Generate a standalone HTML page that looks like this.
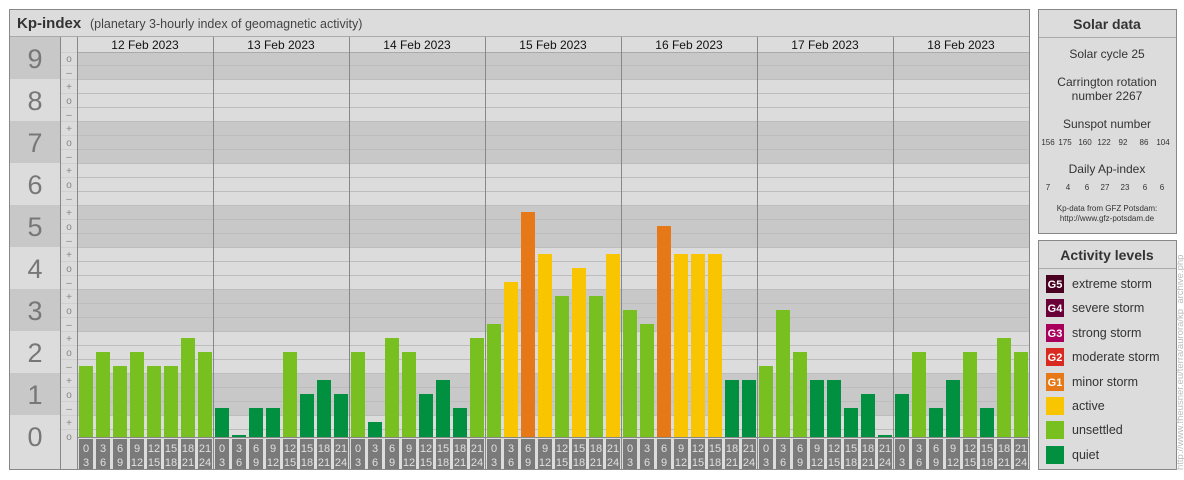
<!DOCTYPE html>
<html><head><meta charset="utf-8"><style>
html,body{margin:0;padding:0;background:#fff;}
svg{display:block;font-family:"Liberation Sans",Arial,sans-serif;}
</style></head><body>
<svg width="1184" height="480" viewBox="0 0 1184 480" xmlns="http://www.w3.org/2000/svg">
<rect x="0" y="0" width="1184" height="480" fill="#fff"/>
<!-- main panel -->
<rect x="9.5" y="9.5" width="1020" height="460" fill="#dcdcdc" stroke="#888" stroke-width="1"/>
<line x1="10" y1="36.5" x2="1029" y2="36.5" stroke="#aaa"/>
<text x="17" y="28" font-size="15" font-weight="bold" fill="#333">Kp-index</text>
<text x="90" y="28" font-size="12.5" fill="#444">(planetary 3-hourly index of geomagnetic activity)</text>
<!-- bands (left col + chart) -->
<g>
<rect x="10" y="37" width="50" height="42" fill="#c8c8c8"/>
<rect x="77" y="52" width="952" height="27" fill="#c8c8c8"/>
<rect x="10" y="121" width="50" height="42" fill="#c8c8c8"/><rect x="77" y="121" width="952" height="42" fill="#c8c8c8"/>
<rect x="10" y="205" width="50" height="42" fill="#c8c8c8"/><rect x="77" y="205" width="952" height="42" fill="#c8c8c8"/>
<rect x="10" y="289" width="50" height="42" fill="#c8c8c8"/><rect x="77" y="289" width="952" height="42" fill="#c8c8c8"/>
<rect x="10" y="373" width="50" height="42" fill="#c8c8c8"/><rect x="77" y="373" width="952" height="42" fill="#c8c8c8"/>
</g>
<!-- grid lines -->
<g stroke="#bdbdbd" stroke-width="1">
<line x1="60" y1="429.5" x2="1029" y2="429.5"/><line x1="60" y1="415.5" x2="1029" y2="415.5"/><line x1="60" y1="401.5" x2="1029" y2="401.5"/>
<line x1="60" y1="387.5" x2="1029" y2="387.5"/><line x1="60" y1="373.5" x2="1029" y2="373.5"/><line x1="60" y1="359.5" x2="1029" y2="359.5"/>
<line x1="60" y1="345.5" x2="1029" y2="345.5"/><line x1="60" y1="331.5" x2="1029" y2="331.5"/><line x1="60" y1="317.5" x2="1029" y2="317.5"/>
<line x1="60" y1="303.5" x2="1029" y2="303.5"/><line x1="60" y1="289.5" x2="1029" y2="289.5"/><line x1="60" y1="275.5" x2="1029" y2="275.5"/>
<line x1="60" y1="261.5" x2="1029" y2="261.5"/><line x1="60" y1="247.5" x2="1029" y2="247.5"/><line x1="60" y1="233.5" x2="1029" y2="233.5"/>
<line x1="60" y1="219.5" x2="1029" y2="219.5"/><line x1="60" y1="205.5" x2="1029" y2="205.5"/><line x1="60" y1="191.5" x2="1029" y2="191.5"/>
<line x1="60" y1="177.5" x2="1029" y2="177.5"/><line x1="60" y1="163.5" x2="1029" y2="163.5"/><line x1="60" y1="149.5" x2="1029" y2="149.5"/>
<line x1="60" y1="135.5" x2="1029" y2="135.5"/><line x1="60" y1="121.5" x2="1029" y2="121.5"/><line x1="60" y1="107.5" x2="1029" y2="107.5"/>
<line x1="60" y1="93.5" x2="1029" y2="93.5"/><line x1="60" y1="79.5" x2="1029" y2="79.5"/><line x1="60" y1="65.5" x2="1029" y2="65.5"/>
<line x1="60" y1="52.5" x2="1029" y2="52.5"/>
</g>
<rect x="61" y="37" width="16" height="433" fill="#dcdcdc" opacity="0.6"/>
<line x1="60.5" y1="37" x2="60.5" y2="470" stroke="#888"/>
<line x1="77.5" y1="37" x2="77.5" y2="470" stroke="#888"/>
<!-- Kp numbers -->
<g font-size="27" fill="#777" text-anchor="middle">
<text x="35" y="68">9</text><text x="35" y="110">8</text><text x="35" y="152">7</text><text x="35" y="194">6</text>
<text x="35" y="236">5</text><text x="35" y="278">4</text><text x="35" y="320">3</text><text x="35" y="362">2</text>
<text x="35" y="404">1</text><text x="35" y="446">0</text>
</g>
<!-- signs -->
<g font-size="10" fill="#888" text-anchor="middle">
<text x="69" y="62">o</text><text x="69" y="76">–</text>
<text x="69" y="90">+</text><text x="69" y="104">o</text><text x="69" y="118">–</text>
<text x="69" y="132">+</text><text x="69" y="146">o</text><text x="69" y="160">–</text>
<text x="69" y="174">+</text><text x="69" y="188">o</text><text x="69" y="202">–</text>
<text x="69" y="216">+</text><text x="69" y="230">o</text><text x="69" y="244">–</text>
<text x="69" y="258">+</text><text x="69" y="272">o</text><text x="69" y="286">–</text>
<text x="69" y="300">+</text><text x="69" y="314">o</text><text x="69" y="328">–</text>
<text x="69" y="342">+</text><text x="69" y="356">o</text><text x="69" y="370">–</text>
<text x="69" y="384">+</text><text x="69" y="398">o</text><text x="69" y="412">–</text>
<text x="69" y="426">+</text><text x="69" y="440">o</text>
</g>
<!-- date header -->
<rect x="78" y="37" width="951" height="15" fill="#dcdcdc"/>
<line x1="78" y1="52.5" x2="1029" y2="52.5" stroke="#aaa"/>
<g font-size="12" fill="#111" text-anchor="middle">
<text x="145" y="49">12 Feb 2023</text><text x="281" y="49">13 Feb 2023</text><text x="417" y="49">14 Feb 2023</text>
<text x="553" y="49">15 Feb 2023</text><text x="689" y="49">16 Feb 2023</text><text x="825" y="49">17 Feb 2023</text>
<text x="961" y="49">18 Feb 2023</text>
</g>
<!-- bars -->
<g>
<!-- d0 -->
<rect x="79" y="366" width="14" height="71" fill="#77c020"/><rect x="96" y="352" width="14" height="85" fill="#77c020"/>
<rect x="113" y="366" width="14" height="71" fill="#77c020"/><rect x="130" y="352" width="14" height="85" fill="#77c020"/>
<rect x="147" y="366" width="14" height="71" fill="#77c020"/><rect x="164" y="366" width="14" height="71" fill="#77c020"/>
<rect x="181" y="338" width="14" height="99" fill="#77c020"/><rect x="198" y="352" width="14" height="85" fill="#77c020"/>
<!-- d1 -->
<rect x="215" y="408" width="14" height="29" fill="#009040"/><rect x="232" y="435" width="14" height="2" fill="#009040"/>
<rect x="249" y="408" width="14" height="29" fill="#009040"/><rect x="266" y="408" width="14" height="29" fill="#009040"/>
<rect x="283" y="352" width="14" height="85" fill="#77c020"/><rect x="300" y="394" width="14" height="43" fill="#009040"/>
<rect x="317" y="380" width="14" height="57" fill="#009040"/><rect x="334" y="394" width="14" height="43" fill="#009040"/>
<!-- d2 -->
<rect x="351" y="352" width="14" height="85" fill="#77c020"/><rect x="368" y="422" width="14" height="15" fill="#009040"/>
<rect x="385" y="338" width="14" height="99" fill="#77c020"/><rect x="402" y="352" width="14" height="85" fill="#77c020"/>
<rect x="419" y="394" width="14" height="43" fill="#009040"/><rect x="436" y="380" width="14" height="57" fill="#009040"/>
<rect x="453" y="408" width="14" height="29" fill="#009040"/><rect x="470" y="338" width="14" height="99" fill="#77c020"/>
<!-- d3 -->
<rect x="487" y="324" width="14" height="113" fill="#77c020"/><rect x="504" y="282" width="14" height="155" fill="#f9c400"/>
<rect x="521" y="212" width="14" height="225" fill="#e67817"/><rect x="538" y="254" width="14" height="183" fill="#f9c400"/>
<rect x="555" y="296" width="14" height="141" fill="#77c020"/><rect x="572" y="268" width="14" height="169" fill="#f9c400"/>
<rect x="589" y="296" width="14" height="141" fill="#77c020"/><rect x="606" y="254" width="14" height="183" fill="#f9c400"/>
<!-- d4 -->
<rect x="623" y="310" width="14" height="127" fill="#77c020"/><rect x="640" y="324" width="14" height="113" fill="#77c020"/>
<rect x="657" y="226" width="14" height="211" fill="#e67817"/><rect x="674" y="254" width="14" height="183" fill="#f9c400"/>
<rect x="691" y="254" width="14" height="183" fill="#f9c400"/><rect x="708" y="254" width="14" height="183" fill="#f9c400"/>
<rect x="725" y="380" width="14" height="57" fill="#009040"/><rect x="742" y="380" width="14" height="57" fill="#009040"/>
<!-- d5 -->
<rect x="759" y="366" width="14" height="71" fill="#77c020"/><rect x="776" y="310" width="14" height="127" fill="#77c020"/>
<rect x="793" y="352" width="14" height="85" fill="#77c020"/><rect x="810" y="380" width="14" height="57" fill="#009040"/>
<rect x="827" y="380" width="14" height="57" fill="#009040"/><rect x="844" y="408" width="14" height="29" fill="#009040"/>
<rect x="861" y="394" width="14" height="43" fill="#009040"/><rect x="878" y="435" width="14" height="2" fill="#009040"/>
<!-- d6 -->
<rect x="895" y="394" width="14" height="43" fill="#009040"/><rect x="912" y="352" width="14" height="85" fill="#77c020"/>
<rect x="929" y="408" width="14" height="29" fill="#009040"/><rect x="946" y="380" width="14" height="57" fill="#009040"/>
<rect x="963" y="352" width="14" height="85" fill="#77c020"/><rect x="980" y="408" width="14" height="29" fill="#009040"/>
<rect x="997" y="338" width="14" height="99" fill="#77c020"/><rect x="1014" y="352" width="14" height="85" fill="#77c020"/>
</g>
<!-- bottom label area -->
<rect x="78" y="438" width="951" height="32" fill="#dcdcdc"/>
<line x1="78" y1="437.5" x2="1029" y2="437.5" stroke="#888"/>
<g fill="#7a7a7a">
<rect x="79" y="439" width="14" height="30"/><rect x="96" y="439" width="14" height="30"/><rect x="113" y="439" width="14" height="30"/><rect x="130" y="439" width="14" height="30"/><rect x="147" y="439" width="14" height="30"/><rect x="164" y="439" width="14" height="30"/><rect x="181" y="439" width="14" height="30"/><rect x="198" y="439" width="14" height="30"/>
<rect x="215" y="439" width="14" height="30"/><rect x="232" y="439" width="14" height="30"/><rect x="249" y="439" width="14" height="30"/><rect x="266" y="439" width="14" height="30"/><rect x="283" y="439" width="14" height="30"/><rect x="300" y="439" width="14" height="30"/><rect x="317" y="439" width="14" height="30"/><rect x="334" y="439" width="14" height="30"/>
<rect x="351" y="439" width="14" height="30"/><rect x="368" y="439" width="14" height="30"/><rect x="385" y="439" width="14" height="30"/><rect x="402" y="439" width="14" height="30"/><rect x="419" y="439" width="14" height="30"/><rect x="436" y="439" width="14" height="30"/><rect x="453" y="439" width="14" height="30"/><rect x="470" y="439" width="14" height="30"/>
<rect x="487" y="439" width="14" height="30"/><rect x="504" y="439" width="14" height="30"/><rect x="521" y="439" width="14" height="30"/><rect x="538" y="439" width="14" height="30"/><rect x="555" y="439" width="14" height="30"/><rect x="572" y="439" width="14" height="30"/><rect x="589" y="439" width="14" height="30"/><rect x="606" y="439" width="14" height="30"/>
<rect x="623" y="439" width="14" height="30"/><rect x="640" y="439" width="14" height="30"/><rect x="657" y="439" width="14" height="30"/><rect x="674" y="439" width="14" height="30"/><rect x="691" y="439" width="14" height="30"/><rect x="708" y="439" width="14" height="30"/><rect x="725" y="439" width="14" height="30"/><rect x="742" y="439" width="14" height="30"/>
<rect x="759" y="439" width="14" height="30"/><rect x="776" y="439" width="14" height="30"/><rect x="793" y="439" width="14" height="30"/><rect x="810" y="439" width="14" height="30"/><rect x="827" y="439" width="14" height="30"/><rect x="844" y="439" width="14" height="30"/><rect x="861" y="439" width="14" height="30"/><rect x="878" y="439" width="14" height="30"/>
<rect x="895" y="439" width="14" height="30"/><rect x="912" y="439" width="14" height="30"/><rect x="929" y="439" width="14" height="30"/><rect x="946" y="439" width="14" height="30"/><rect x="963" y="439" width="14" height="30"/><rect x="980" y="439" width="14" height="30"/><rect x="997" y="439" width="14" height="30"/><rect x="1014" y="439" width="14" height="30"/>
</g>
<g font-size="11" fill="#e0e0e0" text-anchor="middle">
<text x="86" y="452">0</text><text x="103" y="452">3</text><text x="120" y="452">6</text><text x="137" y="452">9</text><text x="154" y="452">12</text><text x="171" y="452">15</text><text x="188" y="452">18</text><text x="205" y="452">21</text>
<text x="86" y="466">3</text><text x="103" y="466">6</text><text x="120" y="466">9</text><text x="137" y="466">12</text><text x="154" y="466">15</text><text x="171" y="466">18</text><text x="188" y="466">21</text><text x="205" y="466">24</text>
<text x="222" y="452">0</text><text x="239" y="452">3</text><text x="256" y="452">6</text><text x="273" y="452">9</text><text x="290" y="452">12</text><text x="307" y="452">15</text><text x="324" y="452">18</text><text x="341" y="452">21</text>
<text x="222" y="466">3</text><text x="239" y="466">6</text><text x="256" y="466">9</text><text x="273" y="466">12</text><text x="290" y="466">15</text><text x="307" y="466">18</text><text x="324" y="466">21</text><text x="341" y="466">24</text>
<text x="358" y="452">0</text><text x="375" y="452">3</text><text x="392" y="452">6</text><text x="409" y="452">9</text><text x="426" y="452">12</text><text x="443" y="452">15</text><text x="460" y="452">18</text><text x="477" y="452">21</text>
<text x="358" y="466">3</text><text x="375" y="466">6</text><text x="392" y="466">9</text><text x="409" y="466">12</text><text x="426" y="466">15</text><text x="443" y="466">18</text><text x="460" y="466">21</text><text x="477" y="466">24</text>
<text x="494" y="452">0</text><text x="511" y="452">3</text><text x="528" y="452">6</text><text x="545" y="452">9</text><text x="562" y="452">12</text><text x="579" y="452">15</text><text x="596" y="452">18</text><text x="613" y="452">21</text>
<text x="494" y="466">3</text><text x="511" y="466">6</text><text x="528" y="466">9</text><text x="545" y="466">12</text><text x="562" y="466">15</text><text x="579" y="466">18</text><text x="596" y="466">21</text><text x="613" y="466">24</text>
<text x="630" y="452">0</text><text x="647" y="452">3</text><text x="664" y="452">6</text><text x="681" y="452">9</text><text x="698" y="452">12</text><text x="715" y="452">15</text><text x="732" y="452">18</text><text x="749" y="452">21</text>
<text x="630" y="466">3</text><text x="647" y="466">6</text><text x="664" y="466">9</text><text x="681" y="466">12</text><text x="698" y="466">15</text><text x="715" y="466">18</text><text x="732" y="466">21</text><text x="749" y="466">24</text>
<text x="766" y="452">0</text><text x="783" y="452">3</text><text x="800" y="452">6</text><text x="817" y="452">9</text><text x="834" y="452">12</text><text x="851" y="452">15</text><text x="868" y="452">18</text><text x="885" y="452">21</text>
<text x="766" y="466">3</text><text x="783" y="466">6</text><text x="800" y="466">9</text><text x="817" y="466">12</text><text x="834" y="466">15</text><text x="851" y="466">18</text><text x="868" y="466">21</text><text x="885" y="466">24</text>
<text x="902" y="452">0</text><text x="919" y="452">3</text><text x="936" y="452">6</text><text x="953" y="452">9</text><text x="970" y="452">12</text><text x="987" y="452">15</text><text x="1004" y="452">18</text><text x="1021" y="452">21</text>
<text x="902" y="466">3</text><text x="919" y="466">6</text><text x="936" y="466">9</text><text x="953" y="466">12</text><text x="970" y="466">15</text><text x="987" y="466">18</text><text x="1004" y="466">21</text><text x="1021" y="466">24</text>
</g>
<!-- day separators -->
<g stroke="#888">
<line x1="213.5" y1="37" x2="213.5" y2="470"/><line x1="349.5" y1="37" x2="349.5" y2="470"/><line x1="485.5" y1="37" x2="485.5" y2="470"/>
<line x1="621.5" y1="37" x2="621.5" y2="470"/><line x1="757.5" y1="37" x2="757.5" y2="470"/><line x1="893.5" y1="37" x2="893.5" y2="470"/>
</g>
<rect x="9.5" y="9.5" width="1020" height="460" fill="none" stroke="#888"/>

<!-- Solar data panel -->
<rect x="1038.5" y="9.5" width="138" height="224" fill="#dcdcdc" stroke="#888"/>
<line x1="1039" y1="37.5" x2="1176" y2="37.5" stroke="#aaa"/>
<g text-anchor="middle" fill="#333">
<text x="1107" y="29" font-size="14" font-weight="bold">Solar data</text>
<text x="1107" y="58" font-size="12">Solar cycle 25</text>
<text x="1107" y="86" font-size="12">Carrington rotation</text>
<text x="1107" y="100" font-size="12">number 2267</text>
<text x="1107" y="128" font-size="12">Sunspot number</text>
<text x="1107" y="173" font-size="12">Daily Ap-index</text>
</g>
<g font-size="8" fill="#333" text-anchor="middle">
<text x="1048" y="145">156</text><text x="1065" y="145">175</text><text x="1085" y="145">160</text><text x="1104" y="145">122</text><text x="1123" y="145">92</text><text x="1144" y="145">86</text><text x="1163" y="145">104</text>
<text x="1048" y="190">7</text><text x="1068" y="190">4</text><text x="1087" y="190">6</text><text x="1105" y="190">27</text><text x="1125" y="190">23</text><text x="1145" y="190">6</text><text x="1162" y="190">6</text>
<text x="1107" y="211">Kp-data from GFZ Potsdam:</text>
<text x="1107" y="221">http://www.gfz-potsdam.de</text>
</g>

<!-- Activity levels panel -->
<rect x="1038.5" y="240.5" width="138" height="229" fill="#dcdcdc" stroke="#888"/>
<line x1="1039" y1="268.5" x2="1176" y2="268.5" stroke="#aaa"/>
<text x="1107" y="260" font-size="14" font-weight="bold" fill="#333" text-anchor="middle">Activity levels</text>
<rect x="1046" y="275" width="18" height="18" fill="#4a0020"/>
<rect x="1046" y="299" width="18" height="18" fill="#6a0038"/>
<rect x="1046" y="324" width="18" height="18" fill="#a8005c"/>
<rect x="1046" y="348" width="18" height="18" fill="#d82a20"/>
<rect x="1046" y="373" width="18" height="18" fill="#e67817"/>
<rect x="1046" y="397" width="18" height="18" fill="#f9c400"/>
<rect x="1046" y="421" width="18" height="18" fill="#77c020"/>
<rect x="1046" y="446" width="18" height="18" fill="#009040"/>
<g font-size="11" fill="#fff" text-anchor="middle" font-weight="bold">
<text x="1055" y="288">G5</text><text x="1055" y="312">G4</text><text x="1055" y="337">G3</text><text x="1055" y="361">G2</text><text x="1055" y="386">G1</text>
</g>
<g font-size="12.5" fill="#333">
<text x="1072" y="288">extreme storm</text><text x="1072" y="312">severe storm</text><text x="1072" y="337">strong storm</text>
<text x="1072" y="361">moderate storm</text><text x="1072" y="386">minor storm</text><text x="1072" y="410">active</text>
<text x="1072" y="434">unsettled</text><text x="1072" y="459">quiet</text>
</g>
<text transform="translate(1183,470) rotate(-90)" font-size="9.5" fill="#bbb">http://www.fheusner.eu/terra/aurora/kp_archive.php</text>
</svg>
</body></html>
